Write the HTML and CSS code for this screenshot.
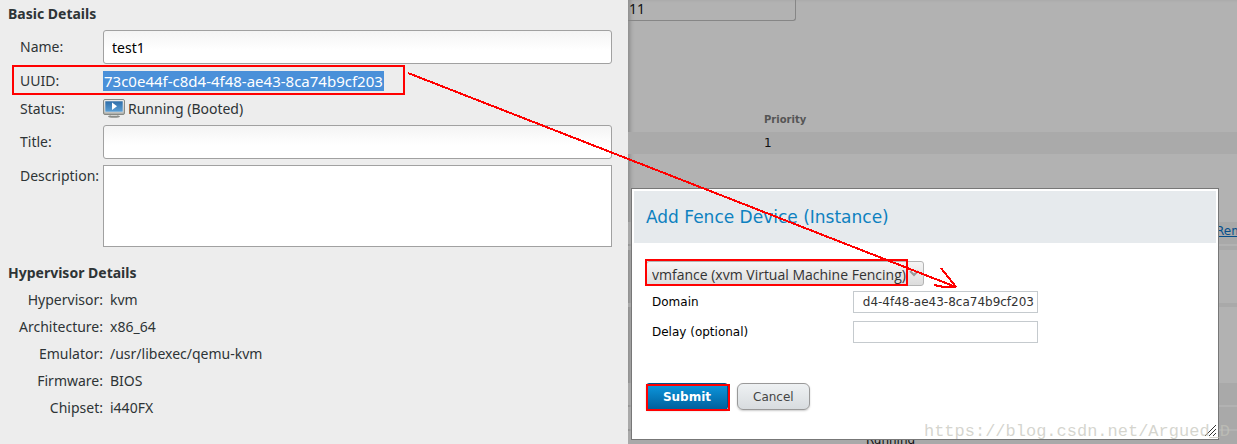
FILE: index.html
```html
<!DOCTYPE html>
<html lang="en">
<head>
<meta charset="utf-8">
<title>Fence device setup</title>
<link rel="stylesheet" href="styles.css">
</head>
<body>
<div class="screen">
  <main class="details">
    <h2 class="heading">Basic Details</h2>
    <form class="basic">
      <label for="name">Name:</label>
      <input class="entry" id="name" type="text" value="test1">
      <span>UUID:</span>
      <span class="value"><mark class="selected">73c0e44f-c8d4-4f48-ae43-8ca74b9cf203</mark></span>
      <span>Status:</span>
      <span class="status">
        <svg class="monitor" width="22" height="19" viewBox="0 0 22 19" aria-hidden="true">
          <defs>
            <linearGradient id="glass" x2="0" y2="1"><stop stop-color="#2e6da8"/><stop offset="1" stop-color="#5a9fd6"/></linearGradient>
            <linearGradient id="frame" x2="0" y2="1"><stop stop-color="#f2f2f0"/><stop offset="1" stop-color="#a9aba7"/></linearGradient>
          </defs>
          <ellipse cx="11" cy="17.5" rx="6" ry="1.3" fill="#8b8d89"/>
          <path d="M8 15h6v2H8z" fill="#d4d5d2"/>
          <rect x=".5" y=".5" width="21" height="15" rx="1.5" fill="url(#frame)" stroke="#888a85"/>
          <rect x="2" y="2" width="18" height="11" fill="url(#glass)" stroke="#e4e5e3" stroke-width=".6"/>
          <path d="M9 3.5v7.5l5-3.7z" fill="#fff"/>
        </svg>
        Running (Booted)
      </span>
      <label for="title">Title:</label>
      <input class="entry" id="title" type="text">
      <label class="top" for="description">Description:</label>
      <textarea class="area" id="description"></textarea>
    </form>
    <h2 class="heading">Hypervisor Details</h2>
    <dl class="hypervisor">
      <dt>Hypervisor:</dt><dd>kvm</dd>
      <dt>Architecture:</dt><dd>x86_64</dd>
      <dt>Emulator:</dt><dd>/usr/libexec/qemu-kvm</dd>
      <dt>Firmware:</dt><dd>BIOS</dd>
      <dt>Chipset:</dt><dd>i440FX</dd>
    </dl>
  </main>

  <section class="cluster">
    <div class="backdrop">
      <div class="filter">11</div>
      <table class="methods">
        <thead><tr><th>Priority</th></tr></thead>
        <tbody><tr><td>1</td></tr></tbody>
      </table>
      <div class="band link-band"><a href="#remove">Remove</a></div>
      <div class="rule"></div>
      <div class="gap"></div>
      <div class="rule"></div>
      <div class="gap wide"></div>
      <div class="band"></div>
      <div class="band second"></div>
      <div class="band state">Running</div>
    </div>
    <div class="dialog" role="dialog" aria-labelledby="dialog-title">
      <h1 class="dialog-title" id="dialog-title">Add Fence Device (Instance)</h1>
      <form class="dialog-body">
        <div class="picker">
          <select class="device" aria-label="Fence device">
            <option>vmfance (xvm Virtual Machine Fencing)</option>
          </select>
          <svg class="chevron" width="10" height="7" viewBox="0 0 10 7" aria-hidden="true"><path d="M1 1l4 4 4-4" fill="none" stroke="#999" stroke-width="2"/></svg>
        </div>
        <div class="fields">
          <label for="domain">Domain</label>
          <input class="scrolled" id="domain" type="text" value="d4-4f48-ae43-8ca74b9cf203">
          <label for="delay">Delay (optional)</label>
          <input id="delay" type="text">
        </div>
        <div class="actions">
          <button class="button primary" type="submit">Submit</button>
          <button class="button" type="button">Cancel</button>
        </div>
      </form>
      <svg class="grip" width="13" height="13" viewBox="0 0 13 13" aria-hidden="true"><path d="M1 12L12 1M5 12l7-7M9 12l3-3" stroke="#333"/></svg>
    </div>
  </section>

  <svg class="marks" width="1237" height="444" viewBox="0 0 1237 444" fill="none" stroke="#f00" stroke-width="2" shape-rendering="crispEdges" aria-hidden="true">
    <path d="M13 66h391v28H13zM646 260h261v25H646zM647 385h82v25H647z"/>
    <path d="M408 73L956 287M941 268l15 19M934 285l10 2h12"/>
  </svg>
  <div class="watermark">https://blog.csdn.net/Argued_D</div>
</div>
</body>
</html>
```
FILE: styles.css
```css
* { box-sizing: border-box; }
body { margin: 0; }

.screen {
  position: relative;
  display: grid;
  grid-template-columns: minmax(0, 628fr) minmax(0, 609fr);
  min-height: 100vh;
  overflow: hidden;
}

.details {
  padding: 4px 16px 0 8px;
  background: #ededed;
  color: #2e3436;
  font: 14px/20px "Noto Sans", sans-serif;
}
.heading { margin: 0; font-size: 14px; line-height: 20px; }

.basic {
  display: grid;
  grid-template-columns: 83px 1fr;
  grid-template-rows: 34px 22px 21px 34px 82px;
  row-gap: 6px;
  align-items: center;
  margin: 6px 0 16px;
  padding-left: 12px;
}
.top { align-self: start; padding-top: 1px; }
.entry, .area {
  width: 100%;
  height: 100%;
  padding: 0 8px;
  border: 1px solid #a1a1a1;
  border-radius: 3px;
  background: linear-gradient(#f4f4f4, #fff 60%);
  color: #000;
  font: inherit;
}
.area { display: block; border-radius: 0; background: #fff; resize: none; }
.selected {
  display: inline-block;
  padding: 0 1px;
  background: #4a90d9;
  color: #fff;
  font-size: 15px;
}
.status { display: flex; align-items: center; gap: 3px; }

.hypervisor {
  display: grid;
  grid-template-columns: 95px 1fr;
  grid-auto-rows: 20px;
  gap: 7px;
  margin: 7px 0 0;
}
.hypervisor dt { text-align: right; }
.hypervisor dd { margin: 0; }

.cluster { position: relative; font: 12px/18px "DejaVu Sans", sans-serif; }
.backdrop {
  height: 100%;
  overflow: hidden;
  background: #b2b2b2;
  color: #111;
  box-shadow: inset 4px 0 4px -2px #888;
}
.filter {
  width: 168px;
  height: 21px;
  padding-left: 1px;
  border: 1px solid #868686;
  border-width: 0 1px 1px 0;
  border-radius: 0 0 3px 0;
  font: 14px/18px "Noto Sans", sans-serif;
}
.methods { width: 100%; margin-top: 87px; border-spacing: 0; }
.methods th, .methods td { padding: 0 0 0 136px; text-align: left; }
.methods th { height: 24px; color: #555; font-size: 10px; }
.methods td { height: 22px; background: #aaa; }
.band { height: 22px; background: #a9a9a9; }
.link-band { margin-top: 68px; padding-left: 588px; overflow: hidden; }
.link-band a { color: #064f8c; }
.rule { height: 4px; margin-top: 2px; background: #a9a9a9; }
.gap { height: 51px; }
.gap.wide { height: 76px; }
.second { margin-top: 2px; }
.state { margin-top: 2px; padding-left: 238px; }

.dialog {
  position: absolute;
  top: 188px;
  left: 3px;
  right: 18px;
  padding: 2px;
  border: 1px solid #777;
  background: #fff;
}
.dialog-title {
  margin: 0;
  padding: 0 12px;
  background: #e6eaed;
  color: #0d81c0;
  font-size: 17px;
  font-weight: 400;
  line-height: 52px;
}
.dialog-body { padding: 18px 12px 27px; }
.picker { position: relative; width: 278px; }
.device {
  display: block;
  width: 100%;
  height: 25px;
  padding: 2px 12px 0 5px;
  border: 1px solid #b4b4b4;
  border-radius: 3px;
  appearance: none;
  background: linear-gradient(#f5f5f5, #dcdcdc);
  color: #333;
  font: 14px/20px "Open Sans", "Noto Sans", sans-serif;
}
.chevron { position: absolute; top: 9px; right: 5px; pointer-events: none; }
.fields {
  display: grid;
  grid-template-columns: 201px 185px;
  grid-auto-rows: 22px;
  row-gap: 8px;
  align-items: center;
  padding: 5px 0 0 6px;
}
.fields input {
  height: 22px;
  padding: 0 3px;
  border: 1px solid #c5cace;
  background: #fff;
  color: #333;
  font: inherit;
}
.fields .scrolled { text-align: right; }
.actions { display: flex; gap: 9px; margin-top: 40px; }
.button {
  height: 27px;
  padding: 0 15px;
  border: 1px solid #999;
  border-radius: 6px;
  background: linear-gradient(#eef1f3, #d8dcdf);
  box-shadow: 0 1px 2px #ccc;
  color: #444;
  font: inherit;
}
.primary {
  min-width: 82px;
  border-color: #00558a;
  border-radius: 3px;
  background: linear-gradient(#0d98df, #00609c);
  color: #fff;
  font-weight: 700;
}
.grip { position: absolute; right: 1px; bottom: 2px; }

.marks { position: absolute; top: 0; left: 0; pointer-events: none; }
.watermark {
  position: absolute;
  right: 7px;
  bottom: 9px;
  color: rgba(195, 195, 185, .7);
  font: 17px/24px "Liberation Mono", monospace;
}
```
